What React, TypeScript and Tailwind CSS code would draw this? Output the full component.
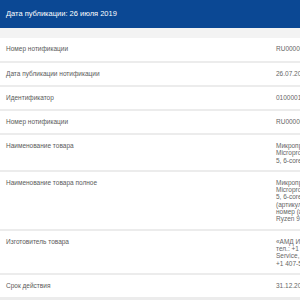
const rows: { label: string; value: string[] }[] = [
  { label: "Номер нотификации", value: ["RU0000018427"] },
  { label: "Дата публикации нотификации", value: ["26.07.2019"] },
  { label: "Идентификатор", value: ["0100001842719"] },
  { label: "Номер нотификации", value: ["RU0000018427"] },
  {
    label: "Наименование товара",
    value: ["Микропроцессор AMD Ryzen", "Microprocessor AMD Ryzen", "5, 6-core"],
  },
  {
    label: "Наименование товара полное",
    value: [
      "Микропроцессор AMD Ryzen",
      "Microprocessor AMD Ryzen",
      "5, 6-core, 12-thread",
      "(артикул) модельный",
      "номер (артикул)",
      "Ryzen 9 3900X",
    ],
  },
  {
    label: "Изготовитель товара",
    value: ["«АМД Инк»", "тел.: +1 408 749 4000", "Service, Inc.", "+1 407-555-0100"],
  },
  { label: "Срок действия", value: ["31.12.2024"] },
];

export default function App() {
  return (
    <div className="w-[300px] h-[300px] overflow-hidden bg-[#ececec] font-['Liberation_Sans',Arial,sans-serif]">
      {/* Header */}
      <div className="h-[28px] bg-[#0b4894] flex items-center px-[6px]">
        <span className="text-white text-[7.5px] leading-none">Дата публикации: 26 июля 2019</span>
      </div>
      <div className="h-[10px] bg-[#f3f3f3]" />

      {/* Rows */}
      <div className="flex flex-col gap-[2px]">
        {rows.map((row, i) => (
          <div
            key={i}
            className={`flex bg-white py-[6px] ${i === 0 ? "min-h-[23px]" : ""}`}
          >
            <div className="w-[276px] shrink-0 pl-[6px] text-[6.5px] leading-[10px] text-[#5a5a5a]">
              {row.label}
            </div>
            <div className="whitespace-nowrap text-[6.5px] leading-[7.3px] text-[#666] pt-[1px]">
              {row.value.map((line, j) => (
                <div key={j}>{line}</div>
              ))}
            </div>
          </div>
        ))}
      </div>
    </div>
  );
}
